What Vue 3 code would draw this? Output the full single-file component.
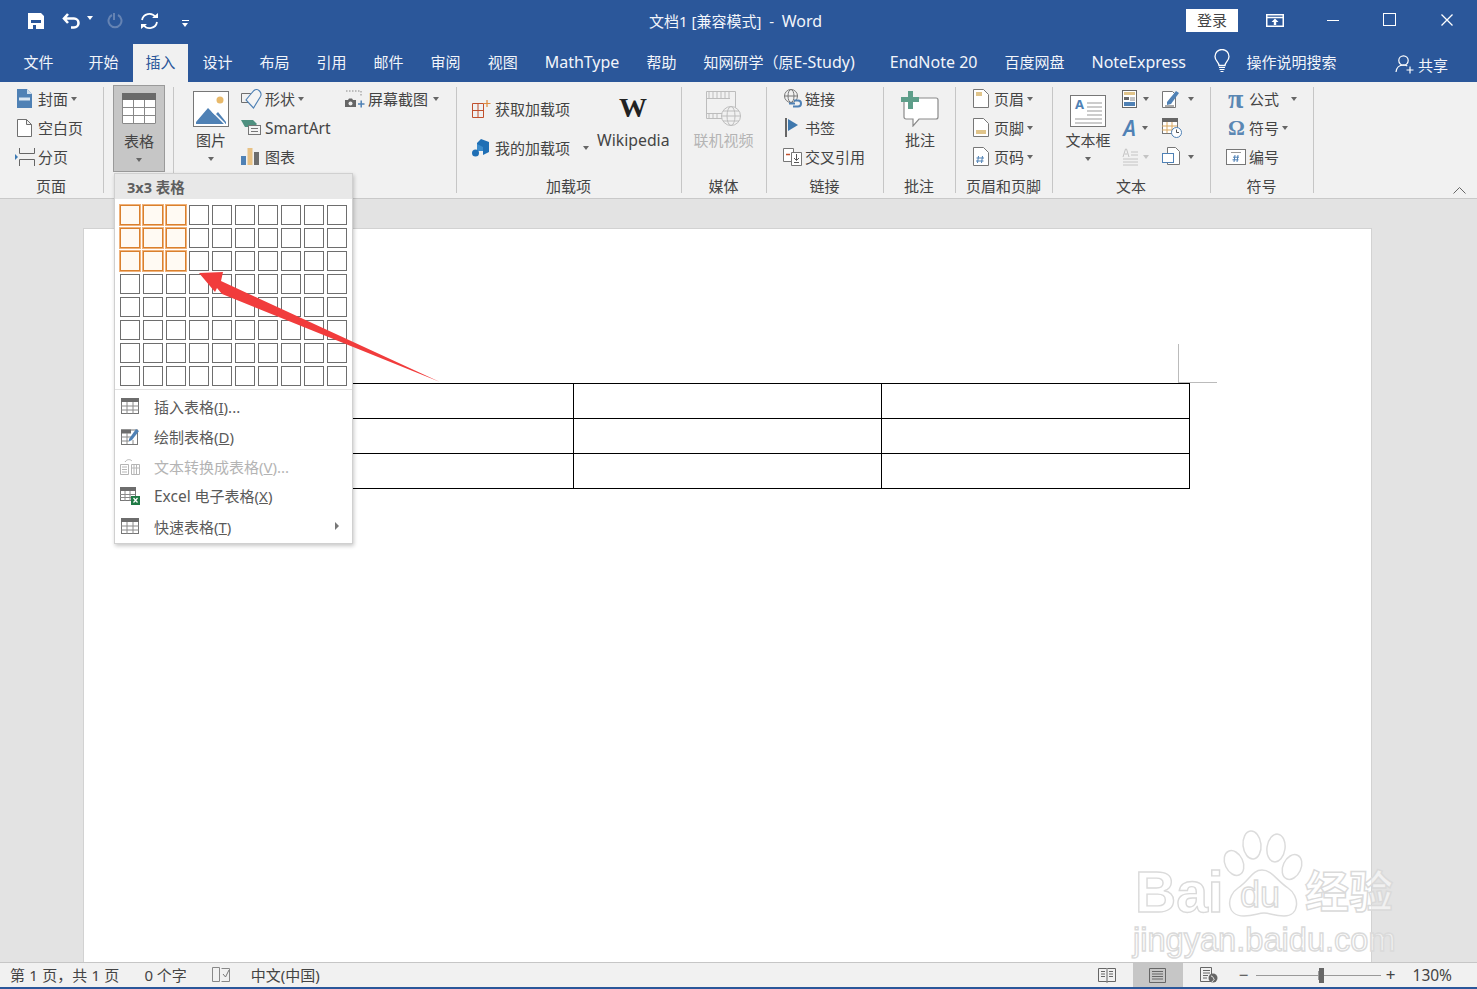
<template>
  <div class="word">
    <svg class="defs" width="0" height="0">
      <symbol id="tbl" viewBox="0 0 18 16">
        <rect x="0.5" y="0.5" width="17" height="15" fill="#fff" stroke="#777" />
        <rect x="0" y="0" width="18" height="4" fill="#6d6d6d" />
        <path d="M0 8h18M0 12h18M6 4v12M12 4v12" stroke="#8a8a8a" fill="none" />
      </symbol>
    </svg>

    <!-- title bar -->
    <header class="titlebar">
      <div class="qat">
        <svg class="q-save" width="16" height="16" viewBox="0 0 16 16"><path fill="#fff" fill-rule="evenodd" d="M0 0H13L16 3V16H0ZM3 7V10H13V7ZM5 12V16H8V12Z" /></svg>
        <svg class="q-undo" width="19" height="17" viewBox="0 0 19 17"><path d="M6 2 2 6.500 6 11M3 6.500H12a4.500 4.500 0 0 1 0 9H9" fill="none" stroke="#fff" stroke-width="2.600" /></svg>
        <span class="q-caret"></span>
        <svg class="q-redo" width="17" height="17" viewBox="0 0 17 17"><path d="M6 3a6.500 6.500 0 1 0 6 0M8 1v7" fill="none" stroke="#6583b3" stroke-width="2" /></svg>
        <svg class="q-sync" width="21" height="18" viewBox="0 0 21 18"><path d="M3 8a7.500 7.500 0 0 1 13.500-3M18 10a7.500 7.500 0 0 1-13.500 3" fill="none" stroke="#fff" stroke-width="1.800" /><path d="M13 6h6V1ZM8 12H2v5Z" fill="#fff" /></svg>
        <span class="q-more"></span>
      </div>
      <div class="doc-title">文档1 [兼容模式]&nbsp; - &nbsp;<span class="latin">Word</span></div>
      <div class="winctl">
        <button class="login">登录</button>
        <svg class="w-disp" width="18" height="13" viewBox="0 0 18 13"><path d="M.750.750h16.500v11.500H.750zM1 3.500h16" fill="none" stroke="#fff" stroke-width="1.500" /><path d="M9 4.500 5.500 8h2.300v3h2.400V8h2.300Z" fill="#fff" /></svg>
        <span class="w-min"></span>
        <span class="w-max"></span>
        <svg class="w-close" width="12" height="12" viewBox="0 0 12 12"><path d="M.500.500l11 11M11.500.500l-11 11" stroke="#fff" stroke-width="1.300" /></svg>
      </div>
    </header>

    <!-- tabs -->
    <nav class="tabs">
      <span
        v-for="t in tabs"
        :key="t.name + t.latin"
        class="tab"
        :class="{ active: t.active, wide: t.wide }"
      >{{ t.name }}<span v-if="t.latin" class="latin">{{ t.latin }}</span></span>
      <svg class="bulb" width="16" height="24" viewBox="0 0 16 24"><path d="M5 16.500C5 13 1 12 1 7.500a7 7 0 0 1 14 0c0 4.500-4 5.500-4 9Z" fill="none" stroke="#fff" stroke-width="1.300" /><path d="M5 18.500h6M5.500 20.500h5M6.500 22.500h3" stroke="#fff" stroke-width="1.200" /></svg>
      <span class="search">操作说明搜索</span>
      <div class="share">
        <svg width="20" height="20" viewBox="0 0 20 20"><circle cx="8.500" cy="6.500" r="4.700" fill="none" stroke="#fff" stroke-width="1.200" /><path d="M1 18c.5-4.500 3-7 7.500-7 1.500 0 2.800.3 3.800 1M15 12.500v7M11.500 16h7" fill="none" stroke="#fff" stroke-width="1.200" /></svg>
        <span>共享</span>
      </div>
    </nav>

    <!-- ribbon -->
    <section class="ribbon">
      <div class="group g-page">
        <div class="content">
          <div class="rows">
            <div class="row"><span class="slot s21"><svg width="15" height="19" viewBox="0 0 15 19"><path d="M0 0h10l5 5v14H0Z" fill="#4f81b5" /><path d="M10 0v5h5Z" fill="#cfe0ef" /><path d="M2 8.500h11v3H2Z" fill="#dbe7f2" /></svg></span>封面<i class="caret"></i></div>
            <div class="row"><span class="slot s21"><svg width="15" height="18" viewBox="0 0 15 18"><path d="M.500.500h9l5 5v12H.500ZM9.500.500v5h5" fill="#fff" stroke="#6f6f6f" /></svg></span>空白页</div>
            <div class="row"><span class="slot s21 pull"><svg width="20" height="18" viewBox="0 0 20 18"><path d="M4.500 0V5.500H19.500V0M4.500 18V11.500H19.500V18" fill="none" stroke="#666" /><path d="M0 6l3 3-3 3Z" fill="#3d7ab3" /></svg></span>分页</div>
          </div>
        </div>
        <div class="label">页面</div>
      </div>

      <div class="group g-table">
        <div class="content">
          <div class="big pressed">
            <div class="big-icon">
              <svg width="34" height="31" viewBox="0 0 34 31"><rect width="34" height="31" fill="#fff" /><rect width="34" height="7" fill="#6a6a6a" /><path d="M.500 7v23.500h33V7M0 14.500h34M0 22.500h34M11.500 7v24M22.500 7v24" fill="none" stroke="#888" /></svg>
            </div>
            <div class="big-text">表格</div>
            <i class="caret"></i>
          </div>
        </div>
      </div>

      <div class="group g-pic">
        <div class="content">
          <div class="big w36">
            <div class="big-icon">
              <svg width="36" height="36" viewBox="0 0 36 36"><rect x=".5" y=".5" width="35" height="35" fill="#fff" stroke="#777" /><circle cx="27" cy="9" r="3.500" fill="#e8b96a" /><path d="M3 33V31L15 17 22 24 25 21 33 31V33Z" fill="#4f81b5" /><path d="M19 20 32 33" stroke="#fff" stroke-width="1.500" /></svg>
            </div>
            <div class="big-text">图片</div>
            <i class="caret"></i>
          </div>
          <div class="rows col-shapes">
            <div class="row"><span class="slot s24"><svg width="21" height="20" viewBox="0 0 21 20"><path d="M.500 4.500h9v9h-9Z" fill="none" stroke="#6f6f6f" /><path d="M9 6 13 1.500C15 0 17 .5 18.500 2 20 3.500 20.500 5.500 19.500 7.500L12.500 19 5 11Z" fill="#f4f4f4" stroke="#4f81b5" stroke-width="1.100" /></svg></span>形状<i class="caret"></i></div>
            <div class="row"><span class="slot s24"><svg width="20" height="15" viewBox="0 0 20 15"><path d="M0 0h12l4 4-3 3H4L2.500 4.500Z" fill="#4f9080" /><rect x="7.500" y="5.500" width="12" height="9" fill="#f4f4f4" stroke="#777" /><path d="M10 8.500h7M10 11.500h7" stroke="#777" /></svg></span><span class="latin-s">SmartArt</span></div>
            <div class="row"><span class="slot s24"><svg width="18" height="17" viewBox="0 0 18 17"><rect y="8" width="5" height="9" fill="#4f81b5" /><rect x="6.500" width="5" height="17" fill="#e8c184" /><rect x="13" y="4" width="5" height="13" fill="#6d6d6d" /></svg></span>图表</div>
          </div>
          <div class="rows">
            <div class="row"><span class="slot s23"><svg width="20" height="18" viewBox="0 0 20 18"><path d="M1 1h15v6" fill="none" stroke="#888" stroke-dasharray="1.500 1.500" /><path d="M0 10h3l1-1.500h3L8 10h3v7H0Z" fill="#666" /><circle cx="5.500" cy="13.500" r="2" fill="#eee" /><path d="M13 14h6.500M16.200 10.500v7" stroke="#4f81b5" stroke-width="1.500" /></svg></span>屏幕截图<i class="caret big-gap"></i></div>
          </div>
        </div>
      </div>

      <div class="group g-addin">
        <div class="content">
          <div class="rows tall">
            <div class="row"><span class="slot s23"><svg width="19" height="18" viewBox="0 0 19 18"><path d="M.500 3.500h11v14H.500ZM.500 10.500h11M6 3.500v14" fill="none" stroke="#c0502e" /><path d="M15 0v7M11.500 3.500h7" stroke="#e08a3c" stroke-width="1.200" /></svg></span>获取加载项</div>
            <div class="row"><span class="slot s23"><svg width="18" height="18" viewBox="0 0 18 18"><path d="M9 0 17 3V13L11 16V9L5 6V4Z" fill="#1f6fb5" /><path d="M5 5l6 3v4H5Z" fill="#3c8ccc" /><circle cx="3.500" cy="14" r="3.500" fill="#1f6fb5" /></svg></span>我的加载项<i class="caret addin-caret"></i></div>
          </div>
          <div class="wiki">
            <div class="wiki-w">W</div>
            <div class="big-text">Wikipedia</div>
          </div>
        </div>
        <div class="label">加载项</div>
      </div>

      <div class="group g-media">
        <div class="content center">
          <div class="big">
            <div class="big-icon">
              <svg width="35" height="36" viewBox="0 0 35 36"><path d="M.500.500h29v27H.500ZM0 7.500h24M0 22.500h16M3 .500v7M7 .500v7M11 .500v7M15 .500v7M19 .500v7M23 .500v7M3 22.500v5M7 22.500v5M11 22.500v5" fill="#f1f1f1" stroke="#bdbdbd" /><circle cx="25" cy="25" r="9.500" fill="#f1f1f1" stroke="#bdbdbd" /><ellipse cx="25" cy="25" rx="4" ry="9.500" fill="none" stroke="#bdbdbd" /><path d="M15.500 25h19M17 20h16M17 30h16" stroke="#bdbdbd" /></svg>
            </div>
            <div class="big-text dim">联机视频</div>
          </div>
        </div>
        <div class="label">媒体</div>
      </div>

      <div class="group g-link">
        <div class="content">
          <div class="rows">
            <div class="row"><span class="slot s22"><svg width="19" height="19" viewBox="0 0 19 19"><circle cx="8" cy="7" r="6.500" fill="none" stroke="#777" /><ellipse cx="8" cy="7" rx="3" ry="6.500" fill="none" stroke="#777" /><path d="M1.500 7h13" stroke="#777" /><path d="M6 14.500h6M11 11.500h4a3 3 0 0 1 0 6h-5" fill="none" stroke="#4f81b5" stroke-width="2" /></svg></span>链接</div>
            <div class="row"><span class="slot s22"><svg width="15" height="19" viewBox="0 0 15 19"><path d="M3 0v19" stroke="#666" stroke-width="2" /><path d="M5 1 15 7 5 13Z" fill="#3f78ad" /></svg></span>书签</div>
            <div class="row"><span class="slot s22"><svg width="19" height="19" viewBox="0 0 19 19"><path d="M.500 1.500h10v13H.500Z" fill="#fff" stroke="#777" /><path d="M8.500 5.500h10v13h-10Z" fill="#fff" stroke="#777" /><path d="M3 7.500h4" stroke="#c0502e" stroke-width="1.500" /><path d="M13.500 7v6M11 11l2.500 2.500L16 11M11 15.500h5" fill="none" stroke="#555" /></svg></span>交叉引用</div>
          </div>
        </div>
        <div class="label">链接</div>
      </div>

      <div class="group g-comment">
        <div class="content center">
          <div class="big">
            <div class="big-icon">
              <svg width="38" height="36" viewBox="0 0 38 36"><path d="M3 7H35a2 2 0 0 1 2 2V26a2 2 0 0 1-2 2H18L12 35V28H5a2 2 0 0 1-2-2Z" fill="#fff" stroke="#8a8a8a" stroke-width="1.200" /><path d="M7 0h5v6h6v5h-6v7H7v-7H0V6h7Z" fill="#5e9e8a" /></svg>
            </div>
            <div class="big-text">批注</div>
          </div>
        </div>
        <div class="label">批注</div>
      </div>

      <div class="group g-head">
        <div class="content">
          <div class="rows">
            <div class="row"><span class="slot s21"><svg width="16" height="19" viewBox="0 0 16 19"><path d="M.500.500h10l5 5v13H.500Z" fill="#fff" stroke="#777" /><rect x="3" y="3" width="6" height="4" fill="#e0c48a" /></svg></span>页眉<i class="caret"></i></div>
            <div class="row"><span class="slot s21"><svg width="16" height="19" viewBox="0 0 16 19"><path d="M.500.500h10l5 5v13H.500Z" fill="#fff" stroke="#777" /><rect x="3" y="12" width="10" height="4" fill="#e0c48a" /></svg></span>页脚<i class="caret"></i></div>
            <div class="row"><span class="slot s21"><svg width="16" height="19" viewBox="0 0 16 19"><path d="M.500.500h10l5 5v13H.500Z" fill="#fff" stroke="#777" /><path d="M5.500 9 4.500 16M9.500 9l-1 7M3.500 11h7.500M3 14h7.500" stroke="#4f81b5" /></svg></span>页码<i class="caret"></i></div>
          </div>
        </div>
        <div class="label">页眉和页脚</div>
      </div>

      <div class="group g-text">
        <div class="content">
          <div class="big w46">
            <div class="big-icon">
              <svg width="36" height="32" viewBox="0 0 36 32"><rect x=".5" y=".5" width="35" height="31" fill="#fff" stroke="#777" /><path d="M17 8h15M17 12h15M17 16h15M17 20h15M5 24h27M5 28h27" stroke="#999" /></svg>
              <span class="tb-a">A</span>
            </div>
            <div class="big-text">文本框</div>
            <i class="caret"></i>
          </div>
          <div class="rows col-t1">
            <div class="row"><svg width="15" height="18" viewBox="0 0 15 18"><rect x=".5" y=".5" width="14" height="17" fill="#fff" stroke="#666" /><rect x="2" y="2" width="11" height="3" fill="#e0c48a" /><rect x="2" y="7" width="5" height="3" fill="#666" /><path d="M8 8h5M8 10h5" stroke="#888" /><rect x="2" y="12" width="11" height="4" fill="#4f81b5" /></svg><i class="caret gap-c1"></i></div>
            <div class="row"><span class="a-art">A</span><i class="caret gap-c1b"></i></div>
            <div class="row"><svg width="17" height="18" viewBox="0 0 17 18"><path d="M1 11h15M1 14h15M1 17h15M9 4h7M9 7h7" stroke="#c4c4c4" /><path d="M1 9 3.500 1h1L7 9M2.500 6h3" fill="none" stroke="#c4c4c4" /></svg><i class="caret pale gap-c1c"></i></div>
          </div>
          <div class="rows col-t2">
            <div class="row"><svg width="18" height="19" viewBox="0 0 18 19"><path d="M.500 2.500h10l3 3v13H.500Z" fill="#fff" stroke="#777" /><path d="M5 13 14 2l3 2-8 11-4 1Z" fill="#4f81b5" /><path d="M3 17h9" stroke="#555" /></svg><i class="caret gap-c2"></i></div>
            <div class="row"><svg width="20" height="20" viewBox="0 0 20 20"><rect x=".5" y=".5" width="15" height="15" fill="#fff" stroke="#777" /><rect width="16" height="4" fill="#666" /><path d="M0 8h15M0 12h15M5 4v11M10 4v11" stroke="#d9a860" /><circle cx="14.500" cy="14.500" r="5" fill="#fff" stroke="#4f81b5" /><path d="M14.500 11.500v3h2.500" fill="none" stroke="#555" /></svg></div>
            <div class="row"><svg width="18" height="19" viewBox="0 0 18 19"><path d="M5.500.500h8l4 4v13h-12Z" fill="#fff" stroke="#777" /><rect x=".5" y="6.500" width="11" height="9" fill="#fff" stroke="#4f81b5" /></svg><i class="caret gap-c2"></i></div>
          </div>
        </div>
        <div class="label">文本</div>
      </div>

      <div class="group g-sym">
        <div class="content">
          <div class="rows">
            <div class="row"><span class="slot s23 glyph pi">π</span>公式<i class="caret formula-gap"></i></div>
            <div class="row"><span class="slot s23 glyph">Ω</span>符号<i class="caret"></i></div>
            <div class="row"><span class="slot s23"><svg width="20" height="16" viewBox="0 0 20 16"><rect x=".5" y=".5" width="19" height="15" fill="#fff" stroke="#777" /><path d="M5 3.500h10" stroke="#999" /><path d="M9 6 8 13M12 6l-1 7M7 8.200h6M6.500 10.800h6" stroke="#4f81b5" /></svg></span>编号</div>
          </div>
        </div>
        <div class="label">符号</div>
      </div>

      <svg class="collapse" width="13" height="7" viewBox="0 0 13 7"><path d="M.500 6.500l6-6 6 6" fill="none" stroke="#666" /></svg>
    </section>

    <!-- document -->
    <main class="workspace">
      <div class="page">
        <div class="crop-v"></div>
        <div class="crop-h"></div>
        <table class="doc-table">
          <tbody>
            <tr v-for="r in 3" :key="r"><td v-for="c in 3" :key="c"></td></tr>
          </tbody>
        </table>
      </div>
    </main>

    <!-- status bar -->
    <footer class="status">
      <span class="st-page">第 1 页，共 1 页</span>
      <span class="st-words">0 个字</span>
      <svg class="st-check" width="18" height="15" viewBox="0 0 18 15"><path d="M.500.500h7v14h-7ZM9.500 1.500h8v13h-8" fill="none" stroke="#888" /><path d="M11 7l2.500 3L17 3" fill="none" stroke="#777" /></svg>
      <span class="st-lang">中文(中国)</span>
      <div class="st-right">
        <svg width="18" height="15" viewBox="0 0 18 15"><path d="M.500.500h8l.500 1 .500-1h8v13h-8l-.500 1-.500-1h-8ZM9 2v12M3 3.500h4M3 6h4M3 8.500h4M11 3.500h4M11 6h4M11 8.500h4" fill="none" stroke="#666" /></svg>
        <div class="view-on">
          <svg width="17" height="15" viewBox="0 0 17 15"><path d="M.500.500h16v14H.500ZM3 3.500h11M3 6h11M3 8.500h11M3 11h11" fill="none" stroke="#666" /></svg>
        </div>
        <svg width="18" height="16" viewBox="0 0 18 16"><path d="M.500.500h11v14H.500ZM3 3.500h7M3 6h7M3 8.500h5M3 11h4" fill="none" stroke="#666" /><circle cx="13" cy="11" r="4.500" fill="#666" /><path d="M11 9c2 0 2 2 3 3s-2 2-2 3" fill="none" stroke="#eee" /></svg>
        <div class="zoom">
          <span class="z-btn">−</span>
          <div class="z-track"><span class="z-tick"></span><span class="z-thumb"></span></div>
          <span class="z-btn">+</span>
        </div>
        <span class="st-zoom">130%</span>
      </div>
    </footer>

    <!-- dropdown -->
    <div class="menu">
      <div class="menu-head">3x3 表格</div>
      <div class="grid">
        <span v-for="c in cells" :key="c.id" class="cell" :class="{ on: c.on }"></span>
      </div>
      <div class="menu-sep"></div>
      <div class="item">
        <svg class="mi" width="18" height="16"><use href="#tbl" /></svg>
        <span>插入表格(<u>I</u>)...</span>
      </div>
      <div class="item">
        <svg class="mi" width="18" height="17" viewBox="0 0 18 17"><rect x=".5" y="2" width="16" height="14.500" fill="#fff" stroke="#777" /><rect y="1.500" width="10" height="4" fill="#6d6d6d" /><path d="M0 9h10M0 13h8M6 5v11M12 12v4" stroke="#8a8a8a" /><path d="M8 11 15 1l3 2-7 9-3 1.500Z" fill="#4f81b5" /></svg>
        <span>绘制表格(<u>D</u>)</span>
      </div>
      <div class="item off">
        <svg class="mi" width="20" height="17" viewBox="0 0 20 17"><path d="M.500 6.500h8v10h-8ZM2 9h5M2 11.500h5M2 14h5M11.500 6.500h8v10h-8ZM11.500 10h8M14 6.500v10M16.500 6.500v10" fill="none" stroke="#b5b5b5" /><path d="M5 4C7 1 10 1 12 3" fill="none" stroke="#b5b5b5" /></svg>
        <span>文本转换成表格(<u>V</u>)...</span>
      </div>
      <div class="item">
        <svg class="mi" width="20" height="18" viewBox="0 0 20 18"><rect x=".5" y=".5" width="15" height="13" fill="#fff" stroke="#777" /><rect width="16" height="4" fill="#6d6d6d" /><path d="M0 7.500h15M0 10.500h15M5 4v10M10 4v10" stroke="#8a8a8a" /><rect x="11" y="9" width="9" height="9" fill="#1f7a45" /><path d="M13.500 11l4 4.500M17.500 11l-4 4.500" stroke="#fff" stroke-width="1.200" /></svg>
        <span><span class="latin-s">Excel</span> 电子表格(<u>X</u>)</span>
      </div>
      <div class="item">
        <svg class="mi" width="18" height="16"><use href="#tbl" /></svg>
        <span>快速表格(<u>T</u>)</span>
        <i class="sub"></i>
      </div>
    </div>

    <!-- annotation arrow -->
    <svg class="arrow" width="1477" height="989" viewBox="0 0 1477 989">
      <path d="M199 273 223 272 221 281 440 382 222 294 217 288 215 292Z" fill="#f13c3c" />
    </svg>

    <!-- watermark -->
    <div class="mark">
      <svg class="mark-paw" width="84" height="92" viewBox="0 0 84 92">
        <g fill="#fff" fill-opacity=".5" stroke="#dcdcdc" stroke-width="1.500">
          <ellipse cx="30" cy="17" rx="9" ry="14" transform="rotate(-6 30 17)" />
          <ellipse cx="54" cy="20" rx="9" ry="14" transform="rotate(8 54 20)" />
          <ellipse cx="12" cy="35" rx="9" ry="13" transform="rotate(-25 12 35)" />
          <ellipse cx="70" cy="39" rx="9" ry="13" transform="rotate(25 70 39)" />
          <path d="M40 42C30 42 28 52 16 60 4 68 4 88 22 88 32 88 36 85 42 85 48 85 52 88 62 88 78 88 78 68 66 60 54 52 50 42 40 42Z" />
        </g>
      </svg>
      <span class="m-bai">Bai</span>
      <span class="m-du">du</span>
      <span class="m-cn">经验</span>
      <span class="m-url">jingyan.baidu.com</span>
    </div>
  </div>
</template>

<script setup>
const tabs = [
  { name: '文件', wide: true },
  { name: '开始' },
  { name: '插入', active: true },
  { name: '设计' },
  { name: '布局' },
  { name: '引用' },
  { name: '邮件' },
  { name: '审阅' },
  { name: '视图' },
  { name: '', latin: 'MathType' },
  { name: '帮助' },
  { name: '知网研学（原', latin: 'E-Study)', wide: true },
  { name: '', latin: 'EndNote 20' },
  { name: '百度网盘' },
  { name: '', latin: 'NoteExpress' }
]

const cells = []
for (let r = 0; r < 8; r++) {
  for (let c = 0; c < 10; c++) {
    cells.push({ id: r + '-' + c, on: r < 3 && c < 3 })
  }
}
</script>

<style>
html,
body {
  margin: 0;
  overflow: hidden;
  background: #e3e3e3;
}
</style>

<style scoped>
.word {
  position: relative;
  width: 1477px;
  height: 989px;
  display: flex;
  flex-direction: column;
  overflow: hidden;
  font-family: "Noto Sans", "Noto Sans CJK SC", sans-serif;
  font-size: 15px;
  color: #444;
  border-bottom: 2px solid #2b579a;
  box-sizing: border-box;
}
.defs {
  position: absolute;
}
.latin {
  font-size: 16px;
}
.latin-s {
  font-size: 15.500px;
}
.titlebar {
  height: 41px;
  flex: none;
  background: #2b579a;
  color: #f2f5fa;
  display: flex;
  align-items: center;
  position: relative;
}
.qat {
  display: flex;
  align-items: center;
  padding-left: 28px;
  width: 400px;
  box-sizing: border-box;
}
.q-undo {
  margin-left: 18px;
}
.q-caret {
  margin-left: 6px;
  margin-bottom: 5px;
  border-left: 3.500px solid transparent;
  border-right: 3.500px solid transparent;
  border-top: 4px solid #fff;
}
.q-redo {
  margin-left: 13px;
}
.q-sync {
  margin-left: 16px;
}
.q-more {
  margin-left: 22px;
  margin-top: 4px;
  width: 7px;
  height: 6px;
  box-sizing: border-box;
  border-top: 1px solid #fff;
  position: relative;
}
.q-more::after {
  content: "";
  position: absolute;
  left: 0;
  top: 2px;
  border-left: 3.500px solid transparent;
  border-right: 3.500px solid transparent;
  border-top: 4px solid #fff;
}
.doc-title {
  margin-left: 249px;
  font-size: 15px;
  white-space: pre;
}
.winctl {
  margin-left: auto;
  display: flex;
  align-items: center;
  height: 41px;
}
.login {
  width: 52px;
  height: 23px;
  border: 0;
  padding: 0;
  background: #fff;
  color: #444;
  font: inherit;
  font-size: 15px;
  line-height: 23px;
  margin-right: 28px;
  margin-top: -1px;
}
.w-min {
  width: 12px;
  height: 1.500px;
  background: #fff;
  margin-left: 43px;
}
.w-max {
  width: 11px;
  height: 11px;
  border: 1.500px solid #fff;
  margin-left: 44px;
  margin-top: -2px;
}
.w-close {
  margin-left: 45px;
  margin-right: 24px;
  margin-top: -2px;
}
.tabs {
  height: 41px;
  flex: none;
  background: #2b579a;
  color: #f2f5fa;
  display: flex;
  align-items: flex-end;
  padding-left: 11px;
  font-size: 15px;
  white-space: nowrap;
}
.tab {
  height: 38px;
  line-height: 36px;
  padding: 0 12.500px;
  margin-right: 2px;
}
.tab.wide {
  margin-right: 10px;
}
.tab.active {
  background: #f1f1f1;
  color: #2b579a;
}
.bulb {
  margin-left: 14px;
  margin-bottom: 9px;
}
.search {
  margin-left: 16px;
  line-height: 36px;
  height: 38px;
}
.share {
  margin-left: auto;
  margin-right: 29px;
  height: 38px;
  display: flex;
  align-items: center;
  gap: 3px;
  padding-top: 2px;
  box-sizing: border-box;
}
.ribbon {
  height: 117px;
  flex: none;
  background: #f1f1f1;
  border-bottom: 1px solid #c9c9c9;
  box-sizing: border-box;
  display: flex;
  position: relative;
}
.group {
  position: relative;
  box-sizing: border-box;
  display: flex;
  flex-direction: column;
  flex: none;
}
.group::after {
  content: "";
  position: absolute;
  right: 0;
  top: 5px;
  bottom: 5px;
  width: 1px;
  background: #c6c6c6;
}
.content {
  height: 92px;
  box-sizing: border-box;
  padding-top: 3px;
  display: flex;
}
.content.center {
  justify-content: center;
}
.label {
  height: 24px;
  line-height: 24px;
  text-align: center;
  white-space: nowrap;
  padding-right: 2px;
}
.rows {
  display: flex;
  flex-direction: column;
  margin-top: -1px;
}
.row {
  height: 29px;
  display: flex;
  align-items: center;
  white-space: nowrap;
}
.rows.tall {
  margin-top: 0;
  padding-top: 4px;
  width: 125px;
  flex: none;
}
.rows.tall .row {
  height: 39px;
}
.slot {
  display: flex;
  align-items: center;
  flex: none;
}
.s21 { width: 21px; }
.s22 { width: 22px; }
.s23 { width: 23px; }
.s24 { width: 24px; }
.pull {
  margin-left: -2px;
  width: 23px;
}
.caret {
  display: inline-block;
  flex: none;
  margin-left: 3px;
  border-left: 3.500px solid transparent;
  border-right: 3.500px solid transparent;
  border-top: 4px solid #666;
}
.caret.pale {
  border-top-color: #c4c4c4;
}
.big {
  display: flex;
  flex-direction: column;
  align-items: center;
  white-space: nowrap;
}
.big-icon {
  height: 42px;
  display: flex;
  align-items: flex-end;
  justify-content: center;
  position: relative;
}
.big-text {
  line-height: 26px;
  height: 26px;
}
.big .caret {
  margin: 4px 0 0;
}
.dim {
  color: #b4b4b4;
}
.g-page { width: 104px; }
.g-page .content { padding-left: 17px; }
.g-table { width: 70px; }
.g-table .content { padding-left: 9px; }
.g-pic { width: 283px; }
.g-pic .content { padding-left: 19px; }
.g-addin { width: 225px; }
.g-addin .content { padding-left: 15px; }
.g-media { width: 85px; }
.g-media .content { padding-right: 2px; }
.g-link { width: 117px; }
.g-link .content { padding-left: 16px; }
.g-comment { width: 72px; }
.g-head { width: 97px; }
.g-head .content { padding-left: 17px; }
.g-text { width: 158px; }
.g-text .content { padding-left: 12px; }
.g-sym { width: 103px; }
.g-sym .content { padding-left: 15px; }
.big.pressed {
  width: 52px;
  height: 87px;
  box-sizing: border-box;
  background: #c6c6c6;
  border: 1px solid #9a9a9a;
}
.big.pressed .big-icon {
  height: 38px;
}
.big.pressed .big-text {
  margin-top: 4px;
}
.w36 {
  width: 36px;
  flex: none;
}
.w46 {
  width: 46px;
  flex: none;
}
.col-shapes {
  width: 104px;
  margin-left: 12px;
  flex: none;
}
.big-gap {
  margin-left: 5px;
}
.addin-caret {
  margin-left: 13px;
}
.wiki {
  width: 72px;
  flex: none;
  text-align: center;
}
.wiki .big-text {
  font-size: 15.800px;
}
.wiki-w {
  height: 42px;
  line-height: 46px;
  font-family: "Liberation Serif", serif;
  font-weight: 700;
  font-size: 28px;
  color: #222;
}
.tb-a {
  position: absolute;
  left: 5px;
  top: 12px;
  font-size: 13px;
  font-weight: 700;
  line-height: 14px;
  color: #4f81b5;
}
.col-t1 {
  margin-left: 11px;
  width: 40px;
  flex: none;
}
.col-t2 {
  flex: none;
}
.gap-c1 { margin-left: 6px; }
.gap-c1b { margin-left: 5px; }
.gap-c1c { margin-left: 4px; }
.gap-c2 { margin-left: 8px; }
.a-art {
  width: 15px;
  font-size: 21px;
  font-style: italic;
  font-weight: 600;
  line-height: 20px;
  color: #4f81b5;
  text-align: center;
}
.glyph {
  font-family: "Liberation Serif", serif;
  font-weight: 700;
  font-size: 21px;
  line-height: 24px;
  color: #5b87b3;
  padding-left: 2px;
  box-sizing: border-box;
}
.glyph.pi {
  font-size: 28px;
}
.formula-gap {
  margin-left: 12px;
}
.collapse {
  position: absolute;
  right: 11px;
  bottom: 4px;
}
.workspace {
  flex: 1;
  min-height: 0;
  background: #e3e3e3;
  padding: 29px 0 0 83px;
  display: flex;
  align-items: stretch;
}
.page {
  position: relative;
  width: 1289px;
  box-sizing: border-box;
  background: #fff;
  border: 1px solid #d2d2d2;
  border-bottom: 0;
  padding: 154px 0 0 181px;
}
.crop-v {
  position: absolute;
  left: 1094px;
  top: 115px;
  width: 1px;
  height: 38px;
  background: #bbb;
}
.crop-h {
  position: absolute;
  left: 1094px;
  top: 153px;
  width: 39px;
  height: 1px;
  background: #bbb;
}
.doc-table {
  border-collapse: collapse;
  table-layout: fixed;
  width: 924px;
}
.doc-table td {
  border: 1px solid #000;
  padding: 0;
  box-sizing: border-box;
  height: 35px;
  width: 308px;
}
.status {
  height: 25px;
  flex: none;
  background: #f1f1f1;
  border-top: 1px solid #c6c6c6;
  box-sizing: border-box;
  display: flex;
  align-items: center;
  padding: 0 0 2px 10px;
  font-size: 15px;
  white-space: nowrap;
}
.st-page { word-spacing: 0.400px; }
.st-words { margin-left: 25px; }
.st-check { margin-left: 25px; }
.st-lang { margin-left: 21px; }
.st-right {
  margin-left: auto;
  display: flex;
  align-items: center;
  height: 25px;
  margin-bottom: -2px;
  padding-right: 25px;
}
.view-on {
  width: 50px;
  height: 100%;
  background: #c6c6c6;
  margin: 0 17px;
  display: flex;
  align-items: center;
  justify-content: center;
}
.zoom {
  display: flex;
  align-items: center;
  margin-left: 20px;
}
.z-btn {
  width: 12px;
  text-align: center;
  font-size: 17px;
  line-height: 20px;
}
.z-track {
  position: relative;
  width: 125px;
  height: 1px;
  background: #999;
  margin: 0 4px 0 6px;
}
.z-tick {
  position: absolute;
  left: 62px;
  top: -4px;
  width: 1px;
  height: 9px;
  background: #999;
}
.z-thumb {
  position: absolute;
  left: 63px;
  top: -7px;
  width: 5px;
  height: 15px;
  background: #666;
}
.st-zoom {
  margin-left: 16px;
  font-size: 15.500px;
}
.menu {
  position: absolute;
  left: 114px;
  top: 173px;
  width: 239px;
  height: 371px;
  box-sizing: border-box;
  background: #fff;
  border: 1px solid #d0d0d0;
  box-shadow: 1px 2px 4px rgba(0, 0, 0, 0.22);
  color: #5a5a5a;
}
.menu-head {
  height: 25px;
  line-height: 26px;
  padding-left: 12px;
  background: #e8e8e8;
  font-weight: 700;
  font-size: 14.500px;
  color: #5f5f5f;
}
.grid {
  display: grid;
  grid-template-columns: repeat(10, 20px);
  grid-auto-rows: 20px;
  gap: 3px;
  padding: 6px 0 0 5px;
}
.cell {
  box-sizing: border-box;
  border: 1.500px solid #6e6e6e;
  background: #fff;
}
.cell.on {
  border-color: #d9802e;
  background: #fffaf3;
  outline: 1px solid #f0b27a;
}
.menu-sep {
  height: 1px;
  background: #e2e2e2;
  margin-top: 3px;
  margin-bottom: 1px;
}
.item {
  height: 30px;
  display: flex;
  align-items: center;
  padding-left: 5px;
  position: relative;
  white-space: nowrap;
}
.mi {
  flex: none;
  width: 20px;
  margin-right: 14px;
}
.item.off {
  color: #b4b4b4;
}
.sub {
  position: absolute;
  right: 13px;
  top: 11px;
  border-top: 4px solid transparent;
  border-bottom: 4px solid transparent;
  border-left: 4px solid #777;
}
.arrow {
  position: absolute;
  left: 0;
  top: 0;
  pointer-events: none;
}
.mark {
  position: absolute;
  left: 1130px;
  top: 825px;
  width: 270px;
  height: 135px;
  pointer-events: none;
  font-family: "Liberation Sans", sans-serif;
  color: rgba(255, 255, 255, 0.55);
  -webkit-text-stroke: 1.400px #dadada;
}
.mark span {
  position: absolute;
  white-space: nowrap;
}
.mark-paw {
  position: absolute;
  left: 92px;
  top: 3px;
}
.m-bai {
  left: 5px;
  top: 39px;
  font-size: 57px;
  line-height: 57px;
  font-weight: 700;
}
.m-du {
  left: 110px;
  top: 50px;
  font-size: 36px;
  line-height: 40px;
}
.m-cn {
  left: 175px;
  top: 39px;
  font-family: "Noto Sans CJK SC", sans-serif;
  font-size: 44px;
  line-height: 50px;
  font-weight: 700;
}
.m-url {
  left: 3px;
  top: 96px;
  font-size: 32.600px;
  line-height: 38px;
}
</style>
